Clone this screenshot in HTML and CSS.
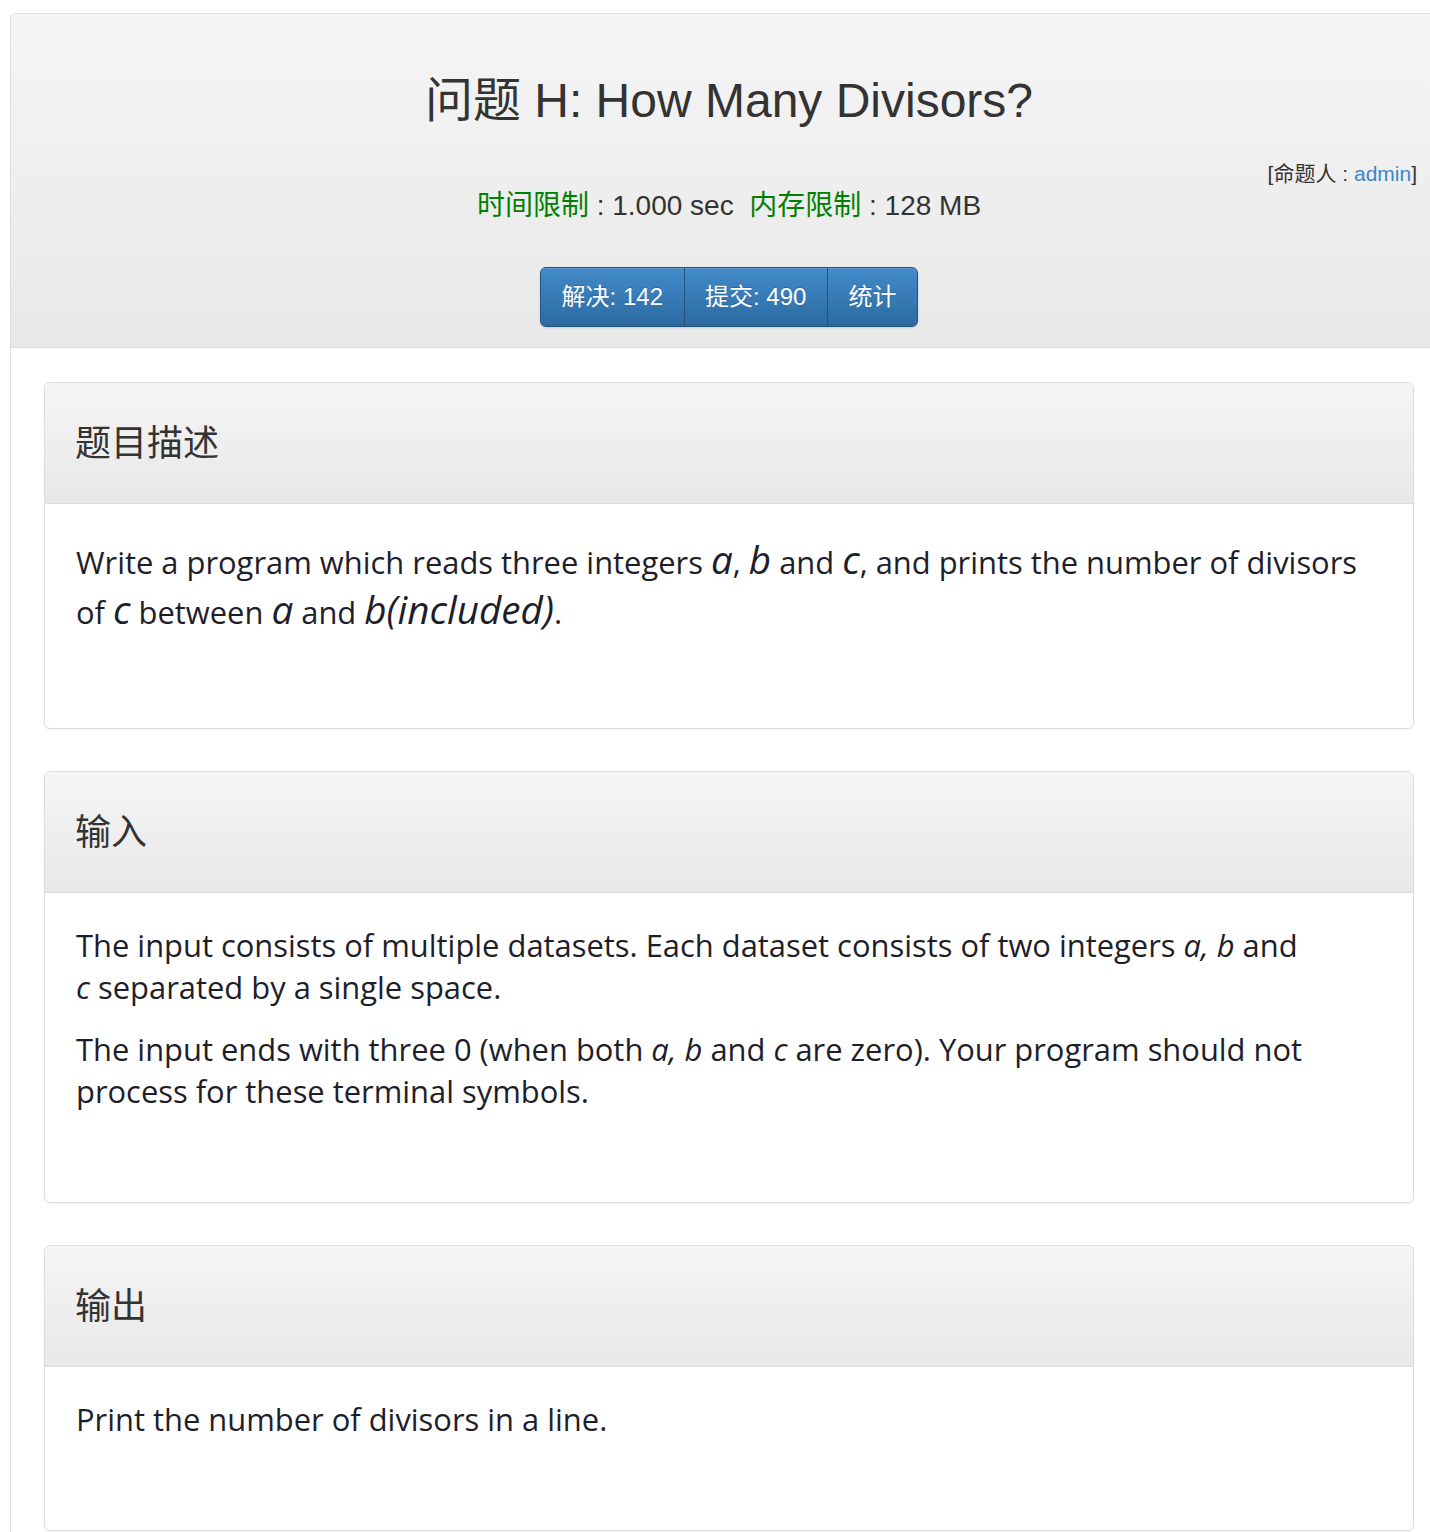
FILE: index.html
```html
<!DOCTYPE html>
<html lang="zh-CN">
<head>
<meta charset="utf-8">
<title>问题 H: How Many Divisors?</title>
<link rel="stylesheet" href="styles.css">
</head>
<body>
<div class="page">
  <div class="frame">
    <div class="hero">
      <h1 class="title">问题 H: How Many Divisors?</h1>
      <div class="author">[命题人 : <a class="author-link" href="#">admin</a>]</div>
      <div class="limits"><span class="lbl">时间限制</span> : 1.000 sec&nbsp;&nbsp;<span class="lbl">内存限制</span> : 128 MB</div>
      <div class="btns"><a class="btn" href="#">解决: 142</a><a class="btn" href="#">提交: 490</a><a class="btn" href="#">统计</a></div>
    </div>
    <div class="content">
      <section class="panel">
        <div class="panel-heading">题目描述</div>
        <div class="panel-body">
          <p class="big">Write a program which reads three integers <i class="mv">a</i>, <i class="mv">b</i> and <i class="mv">c</i>, and prints the number of divisors of <i class="mv">c</i> between <i class="mv">a</i> and <i class="mv">b(included)</i>.</p>
        </div>
      </section>
      <section class="panel">
        <div class="panel-heading">输入</div>
        <div class="panel-body">
          <p>The input consists of multiple datasets. Each dataset consists of two integers <i>a, b</i> and <span class="nw"><i>c</i> separated</span> by a single space.</p>
          <p>The input ends with three 0 (when both <i>a, b</i> and <i>c</i> are zero). Your program should not process for these terminal symbols.</p>
        </div>
      </section>
      <section class="panel">
        <div class="panel-heading">输出</div>
        <div class="panel-body">
          <p>Print the number of divisors in a line.</p>
        </div>
      </section>
    </div>
  </div>
</div>
</body>
</html>
```

FILE: styles.css
```css
html, body {
  overflow-x: hidden;
}
body {
  margin: 0;
  background: #fff;
  font-family: "Liberation Sans", Arial, "Noto Sans CJK SC", sans-serif;
  color: #333;
}
.page {
  padding: 13px 0 0 10px;
}
.frame {
  width: 1438px;
  box-sizing: border-box;
  border: 1px solid #ddd;
  border-bottom: none;
  border-radius: 6px 6px 0 0;
  min-height: 1600px;
}
.hero {
  background: linear-gradient(to bottom, #f5f5f5 0%, #e8e8e8 100%);
  border-bottom: 1px solid #ddd;
  border-radius: 5px 5px 0 0;
  padding: 60px 30px 20px;
  text-align: center;
}
.title {
  margin: 0;
  font-size: 48px;
  line-height: 53px;
  font-weight: 400;
  color: #333;
  font-family: "Liberation Sans", Arial, "Noto Sans CJK SC", sans-serif;
}
.author {
  margin-top: 35px;
  text-align: right;
  font-size: 21px;
  line-height: 24px;
  color: #333;
}
.author-link {
  color: #3a87c8;
  text-decoration: none;
}
.limits {
  margin-top: 4px;
  font-size: 28px;
  line-height: 32px;
  color: #333;
}
.lbl {
  color: #008000;
}
.btns {
  margin-top: 45px;
  display: inline-flex;
  border-radius: 6px;
  box-shadow: 0 1px 2px rgba(0,0,0,.12);
}
.btn {
  display: block;
  padding: 15px 20.5px;
  font-size: 24px;
  line-height: 28px;
  color: #fff;
  text-decoration: none;
  background: linear-gradient(to bottom, #428bca 0%, #2c6aa1 100%);
  border: 1px solid #245580;
  text-shadow: 0 -1px 0 rgba(0,0,0,.2);
  box-shadow: inset 0 1px 0 rgba(255,255,255,.15);
}
.btn + .btn {
  margin-left: -1px;
}
.btn:first-child {
  border-radius: 6px 0 0 6px;
}
.btn:last-child {
  border-radius: 0 6px 6px 0;
}
.content {
  padding: 34px 33px 0;
}
.panel {
  border: 1px solid #ddd;
  border-radius: 6px;
  box-shadow: 0 1px 2px rgba(0,0,0,.05);
  margin-bottom: 42px;
  background: #fff;
}
.panel-heading {
  padding: 37px 30px 43px;
  font-size: 36px;
  line-height: 40px;
  color: #333;
  font-family: "Noto Sans CJK SC", sans-serif;
  background: linear-gradient(to bottom, #f5f5f5 0%, #e8e8e8 100%);
  border-bottom: 1px solid #ddd;
  border-radius: 5px 5px 0 0;
}
.panel-body {
  padding: 31px 31px 90px;
  font-family: "Open Sans", "Noto Sans", "Noto Sans CJK SC", sans-serif;
  font-size: 30.9px;
  line-height: 42px;
  color: #1e1e2a;
}
.panel-body p {
  margin: 0;
}
.panel-body p + p {
  margin-top: 20px;
}
.panel-body p.big {
  line-height: 50px;
  margin: 2px 0 1px;
}
.mv {
  font-size: 1.25em;
  line-height: 1;
}
.nw {
  white-space: nowrap;
}
```
